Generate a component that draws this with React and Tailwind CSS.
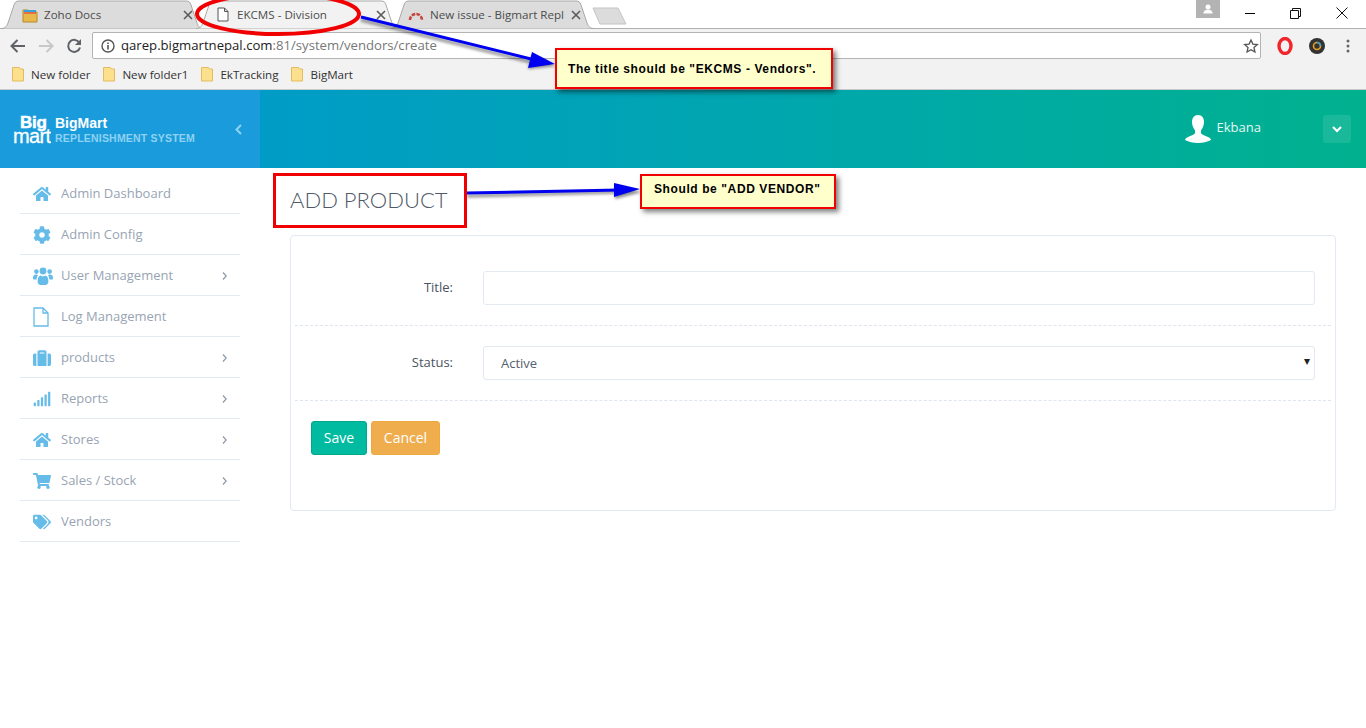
import React from "react";
import { FaHome, FaCog, FaSuitcase, FaSignal, FaShoppingCart, FaTags } from "react-icons/fa";

const UsersIcon = ({ className }) => (
  <svg className={className} width="20" height="18" viewBox="0 0 20 18" fill="currentColor">
    <circle cx="10" cy="4" r="3.4" />
    <circle cx="3.4" cy="4.6" r="2.3" />
    <circle cx="16.6" cy="4.6" r="2.3" />
    <path d="M0 11 C0 8.4 1.4 7.6 3 7.6 C4 7.6 4.6 8 5 8.4 C4 9.4 3.6 10.8 3.6 12.6 H1 C0.4 12.6 0 12 0 11 Z" />
    <path d="M20 11 C20 8.4 18.6 7.6 17 7.6 C16 7.6 15.4 8 15 8.4 C16 9.4 16.4 10.8 16.4 12.6 H19 C19.6 12.6 20 12 20 11 Z" />
    <path d="M4.6 14.5 C4.6 10.5 6 8.4 7.6 8.4 C8.4 9 9.2 9.3 10 9.3 C10.8 9.3 11.6 9 12.4 8.4 C14 8.4 15.4 10.5 15.4 14.5 C15.4 16.6 14 18 12.4 18 H7.6 C6 18 4.6 16.6 4.6 14.5 Z" />
  </svg>
);

const FileIcon = ({ className }) => (
  <svg className={className} width="16" height="20" viewBox="0 0 16 20" fill="none" stroke="currentColor" strokeWidth="1.3">
    <path d="M1 1 H10 L15 6 V19 H1 Z M10 1 V6 H15" />
  </svg>
);

const menu = [
  { label: "Admin Dashboard", icon: FaHome },
  { label: "Admin Config", icon: FaCog },
  { label: "User Management", icon: UsersIcon, more: true },
  { label: "Log Management", icon: FileIcon },
  { label: "products", icon: FaSuitcase, more: true },
  { label: "Reports", icon: FaSignal, more: true },
  { label: "Stores", icon: FaHome, more: true },
  { label: "Sales / Stock", icon: FaShoppingCart, more: true },
  { label: "Vendors", icon: FaTags },
];

const bookmarks = ["New folder", "New folder1", "EkTracking", "BigMart"];

function Tab({ active, children, className }) {
  return (
    <div className={"relative h-[29px] w-[203px] shrink-0 " + className}>
      <svg className="absolute inset-0" width="203" height="29" viewBox="0 0 203 29">
        <path
          d="M0 28.5 C5 28.5 6 26 8 20 L13 5 C14 2 15 1 18 1 L185 1 C188 1 189 2 190 5 L195 20 C197 26 198 28.5 203 28.5"
          fill={active ? "#f2f2f2" : "#dcdcdc"}
          stroke="#a9a9a9"
          strokeWidth="1"
        />
      </svg>
      <div className="relative flex h-full items-center pl-[21px] pr-[13px] text-[11.6px] text-[#4c4c4c]">
        {children}
      </div>
    </div>
  );
}

function TabClose({ className = "" }) {
  return (
    <svg className={"ml-auto shrink-0 " + className} width="10" height="10" viewBox="0 0 10 10">
      <path d="M1 1 L9 9 M9 1 L1 9" stroke="#5a5a5a" strokeWidth="1.6" />
    </svg>
  );
}

function FolderIcon() {
  return (
    <svg width="12" height="16" viewBox="0 0 12 16" className="shrink-0">
      <path d="M0.5 1.5 H7.5 L8.5 3 H11.5 V15 H0.5 Z" fill="#fde08d" stroke="#e3bd5d" />
    </svg>
  );
}

function Browser() {
  return (
    <div className="font-['Open_Sans',sans-serif]">
      {/* tab strip */}
      <div className="flex h-[29px] items-start border-b border-[#b0b0b0] bg-white">
        <div className="flex pl-[1px]">
          <Tab active={false} className="">
            <svg width="16" height="16" viewBox="0 0 16 16" className="mr-[6px] shrink-0">
              <path d="M1 3 H6 L7 5 H15 V15 H1 Z" fill="#e8b84a" stroke="#b58a2a" />
              <path d="M2 4 H14" stroke="#3aa0d8" strokeWidth="2" />
              <path d="M2 6 H14" stroke="#e25c4a" strokeWidth="1.5" />
            </svg>
            <span>Zoho Docs</span>
            <TabClose className="-mr-[2px]" />
          </Tab>
          <Tab active className="-ml-[8px]">
            <svg width="12" height="15" viewBox="0 0 12 15" className="mr-[8px] shrink-0">
              <path d="M1 1 H7.5 L11 4.5 V14 H1 Z M7.5 1 V4.5 H11" fill="white" stroke="#555" />
            </svg>
            <span>EKCMS - Division</span>
            <TabClose />
          </Tab>
          <Tab active={false} className="-ml-[8px]">
            <svg width="16" height="12" viewBox="0 0 16 12" className="-ml-[4px] mr-[6px] shrink-0">
              <path d="M2 11 A6 6 0 0 1 14 11" fill="none" stroke="#c8443c" strokeWidth="2.6" strokeDasharray="3.6 1.2" />
            </svg>
            <span className="w-[134px] overflow-hidden whitespace-nowrap">New issue - Bigmart Repl</span>
            <TabClose />
          </Tab>
          <svg width="36" height="18" viewBox="0 0 36 18" className="-ml-[2px] mt-[7px] shrink-0">
            <path d="M1 1 H26 L34 17 H8 Z" fill="#dcdcdc" stroke="#c4c4c4" />
          </svg>
        </div>
        <div className="ml-auto flex items-start">
          <div className="mr-[25px] flex h-[18px] w-[24px] items-center justify-center bg-[#b3b3b3]">
            <svg width="10" height="10" viewBox="0 0 24 24" fill="white">
              <circle cx="12" cy="7" r="6" />
              <path d="M1 23 C1 16 7 14 12 14 C17 14 23 16 23 23 Z" />
            </svg>
          </div>
          <div className="mt-[7px] flex items-center">
            <span className="mr-[35px] h-[1px] w-[10px] bg-black" />
            <svg width="11" height="11" viewBox="0 0 11 11" className="mr-[35px]">
              <path d="M0.5 2.5 H8.5 V10.5 H0.5 Z M2.5 2.5 V0.5 H10.5 V8.5 H8.5" fill="none" stroke="#111" />
            </svg>
            <svg width="12" height="12" viewBox="0 0 12 12" className="mr-[18px]">
              <path d="M0.5 0.5 L11.5 11.5 M11.5 0.5 L0.5 11.5" stroke="#111" />
            </svg>
          </div>
        </div>
      </div>

      {/* toolbar */}
      <div className="flex h-[33px] items-center bg-[#f2f2f2] pl-[10px]">
        <svg width="16" height="14" viewBox="0 0 16 14" className="mr-[12px]">
          <path d="M15 7 H2 M7.5 1 L1.5 7 L7.5 13" fill="none" stroke="#5f6368" strokeWidth="2" />
        </svg>
        <svg width="16" height="14" viewBox="0 0 16 14" className="mr-[12px]">
          <path d="M1 7 H14 M8.5 1 L14.5 7 L8.5 13" fill="none" stroke="#c8c8c8" strokeWidth="2" />
        </svg>
        <svg width="16" height="16" viewBox="0 0 16 16" className="mr-[10px]">
          <path d="M13.5 5 A6 6 0 1 0 14 9.5" fill="none" stroke="#5f6368" strokeWidth="2" />
          <path d="M15 1 V7 H9 Z" fill="#5f6368" />
        </svg>
        <div className="flex h-[27px] w-[1169px] items-center rounded-[2px] border border-[#b4b4b4] bg-white pl-[8px] pr-[1px]">
          <svg width="14" height="14" viewBox="0 0 14 14" className="mr-[6px] shrink-0">
            <circle cx="7" cy="7" r="6" fill="none" stroke="#555" strokeWidth="1.4" />
            <path d="M7 6 V10.5 M7 3.5 V5" stroke="#555" strokeWidth="1.6" />
          </svg>
          <span className="text-[13.15px] text-[#222]">qarep.bigmartnepal.com</span>
          <span className="text-[13.15px] text-[#777]">:81/system/vendors/create</span>
          <svg width="16" height="16" viewBox="0 0 24 24" className="ml-auto">
            <path
              d="M12 3 L14.8 9.2 L21.5 9.9 L16.5 14.4 L17.9 21 L12 17.6 L6.1 21 L7.5 14.4 L2.5 9.9 L9.2 9.2 Z"
              fill="none"
              stroke="#555"
              strokeWidth="2"
            />
          </svg>
        </div>
        <div className="ml-[16px] flex items-center">
          <svg width="16" height="18" viewBox="0 0 16 18" className="mr-[16px]">
            <ellipse cx="8" cy="9" rx="6" ry="7.5" fill="none" stroke="#f0262c" strokeWidth="3.4" />
          </svg>
          <svg width="16" height="16" viewBox="0 0 16 16" className="mr-[21px]">
            <circle cx="8" cy="8" r="8" fill="#333" />
            <circle cx="8" cy="8" r="3.5" fill="none" stroke="#e8a020" strokeWidth="1.6" />
            <path d="M8 4.5 A3.5 3.5 0 0 1 11.5 8" fill="none" stroke="#2aa4e0" strokeWidth="1.6" />
          </svg>
          <svg width="4" height="14" viewBox="0 0 4 14">
            <circle cx="2" cy="2" r="1.5" fill="#666" />
            <circle cx="2" cy="7" r="1.5" fill="#666" />
            <circle cx="2" cy="12" r="1.5" fill="#666" />
          </svg>
        </div>
      </div>

      {/* bookmarks */}
      <div className="flex h-[28px] items-center gap-[13px] border-b border-[#c9c9c9] bg-[#f2f2f2] pb-[2px] pl-[12px]">
        {bookmarks.map((b) => (
          <div key={b} className="flex items-center gap-[7px] text-[11.6px] text-[#333]">
            <FolderIcon />
            <span>{b}</span>
          </div>
        ))}
      </div>
    </div>
  );
}

function Header() {
  return (
    <header className="flex h-[78px] bg-gradient-to-r from-[#0096d3] to-[#00b18e] font-['Open_Sans',sans-serif]">
      <div className="flex w-[260px] items-center bg-[#1a9cdc] pl-[13px] pr-[17px]">
        {/* logo */}
        <svg width="38" height="32" viewBox="0 0 38 32" className="mr-[4px] shrink-0 font-['Liberation_Sans',sans-serif]" fill="white">
          <text x="7" y="15" fontSize="17" fontWeight="900" textLength="27" stroke="white" strokeWidth="0.5">Big</text>
          <text x="0" y="30" fontSize="20" textLength="38" stroke="white" strokeWidth="0.3">mart</text>
        </svg>
        <div className="pt-[1px] font-['Liberation_Sans',sans-serif] font-bold">
          <div className="text-[14px] leading-[16px] text-white">BigMart</div>
          <div className="text-[10.5px] leading-[14px] tracking-[0.2px] whitespace-nowrap text-[#8fd2f2]">REPLENISHMENT SYSTEM</div>
        </div>
        <svg width="7" height="11" viewBox="0 0 7 11" className="ml-auto mr-[1px]">
          <path d="M6 1 L1.5 5.5 L6 10" fill="none" stroke="#8fd2f2" strokeWidth="2" />
        </svg>
      </div>
      <div className="ml-auto flex items-center">
        <svg width="26" height="28" viewBox="0 0 26 28" fill="white" className="mr-[6px]">
          <path d="M13 0 C17 0 19 3 19 7 C19 10.5 17.5 13.5 16 15.5 V18 C16 19.5 20 20.5 23 22 C25 23 26 24 26 25 C22 27 18 28 13 28 C8 28 4 27 0 25 C0 24 1 23 3 22 C6 20.5 10 19.5 10 18 V15.5 C8.5 13.5 7 10.5 7 7 C7 3 9 0 13 0 Z" />
        </svg>
        <span className="mr-[62px] pb-[2px] text-[13px] text-[#e6f7f4]">Ekbana</span>
        <div className="mr-[15px] flex h-[28px] w-[28px] items-center justify-center rounded-[3px] bg-white/10">
          <svg width="10" height="7" viewBox="0 0 10 7">
            <path d="M1 1 L5 5 L9 1" fill="none" stroke="white" strokeWidth="2" />
          </svg>
        </div>
      </div>
    </header>
  );
}

function Sidebar() {
  return (
    <aside className="w-[270px] shrink-0 pl-[20px] pr-[30px] pt-[5px] font-['Open_Sans',sans-serif]">
      {menu.map(({ label, icon: Icon, more }) => (
        <div key={label} className="flex h-[41px] items-center border-b border-[#e3e9f1] pl-[12px] pr-[13px] pt-[2px]">
          <span className="flex w-[29px] shrink-0 pl-[1px]">
            <Icon className="text-[18px] text-[#65bce9]" />
          </span>
          <span className="text-[13px] text-[#98a4b3]">{label}</span>
          {more && (
            <svg width="5" height="8" viewBox="0 0 5 8" className="ml-auto">
              <path d="M1 0.5 L4.2 4 L1 7.5" fill="none" stroke="#8e99a8" strokeWidth="1.2" />
            </svg>
          )}
        </div>
      ))}
    </aside>
  );
}

function Content() {
  return (
    <main className="min-w-0 flex-1 pl-[20px] pr-[30px] font-['Open_Sans',sans-serif]">
      <h1 className="pt-[17px] font-['Lato',sans-serif] text-[22px] font-light leading-[30px] text-[#4f5968]">
        ADD PRODUCT
      </h1>
      <div className="mt-[20px] h-[276px] rounded-[4px] border border-[#e3e9f1] bg-white">
        <div className="px-[4px] pt-[35px]">
          <div className="flex h-[34px] items-center">
            <label className="w-[158px] text-right text-[13px] font-medium text-[#4a5362]">Title:</label>
            <input className="ml-[30px] h-[34px] w-[832px] rounded-[3px] border border-[#e3e9f1] bg-white" />
          </div>
          <div className="mt-[20px] border-t border-dashed border-[#dfe5ee]" />
          <div className="mt-[20px] flex h-[34px] items-center">
            <label className="w-[158px] text-right text-[13px] font-medium text-[#4a5362]">Status:</label>
            <div className="relative ml-[30px] w-[832px]">
              <select className="h-[34px] w-full appearance-none rounded-[3px] border border-[#e3e9f1] bg-white pl-[17px] pt-[2px] text-[13px] text-[#55606e]">
                <option>Active</option>
              </select>
              <span className="pointer-events-none absolute right-[5px] top-[6px] text-[12px] leading-[18px] text-[#222]">▾</span>
            </div>
          </div>
          <div className="mt-[20px] border-t border-dashed border-[#dfe5ee]" />
        </div>
        <div className="flex gap-[4px] pl-[20px] pt-[20px]">
          <button className="h-[34px] w-[56px] rounded-[3px] border border-[#02a78f] bg-[#00bba0] pb-[2px] text-[14px] text-white">
            Save
          </button>
          <button className="h-[34px] w-[69px] rounded-[3px] border border-[#f0a93f] bg-[#f0ad4e] pb-[2px] text-[14px] text-white">
            Cancel
          </button>
        </div>
      </div>
    </main>
  );
}

function Annotations() {
  return (
    <div className="pointer-events-none absolute left-0 top-0 h-[728px] w-[1366px] font-['Liberation_Sans',sans-serif]">
      <svg className="absolute left-0 top-0" width="1366" height="728" viewBox="0 0 1366 728">
        <defs>
          <filter id="soft" x="-10%" y="-50%" width="120%" height="200%">
            <feGaussianBlur stdDeviation="1.5" />
          </filter>
        </defs>
        <ellipse cx="278" cy="14" rx="81" ry="20" fill="none" stroke="#f00000" strokeWidth="4" />
        <g filter="url(#soft)" opacity="0.45">
          <path d="M361 20 L535 63 M467 196 L620 192" stroke="#000" strokeWidth="3" />
          <path d="M556 66 L532 54 L528 69 Z M642 192 L615 185 L615 199 Z" fill="#000" />
        </g>
        <path d="M361 17 L535 60 M466 193 L620 190" stroke="#0000f0" strokeWidth="3" fill="none" />
        <path d="M555 64 L532 52 L528 68 Z M640 189 L614 183 L614 197 Z" fill="#0000f0" />
        <rect x="274.5" y="174.5" width="191" height="52" fill="none" stroke="#f00000" strokeWidth="3" />
      </svg>
      <div className="absolute left-[555px] top-[48px] flex h-[41px] w-[278px] items-center border-2 border-[#f00000] bg-[#ffffcc] pl-[11px] text-[12px] font-bold tracking-[0.6px] text-black shadow-[3px_3px_5px_rgba(0,0,0,0.5)]">
        The title should be "EKCMS - Vendors".
      </div>
      <div className="absolute left-[640px] top-[174px] flex h-[35px] w-[196px] items-center border-2 border-[#f00000] bg-[#ffffcc] pb-[6px] pl-[12px] text-[12px] font-bold tracking-[0.6px] text-black shadow-[3px_3px_5px_rgba(0,0,0,0.5)]">
        Should be "ADD VENDOR"
      </div>
    </div>
  );
}

export default function App() {
  return (
    <div className="relative h-[728px] w-[1366px] overflow-hidden bg-white">
      <Browser />
      <Header />
      <div className="flex">
        <Sidebar />
        <Content />
      </div>
      <Annotations />
    </div>
  );
}
